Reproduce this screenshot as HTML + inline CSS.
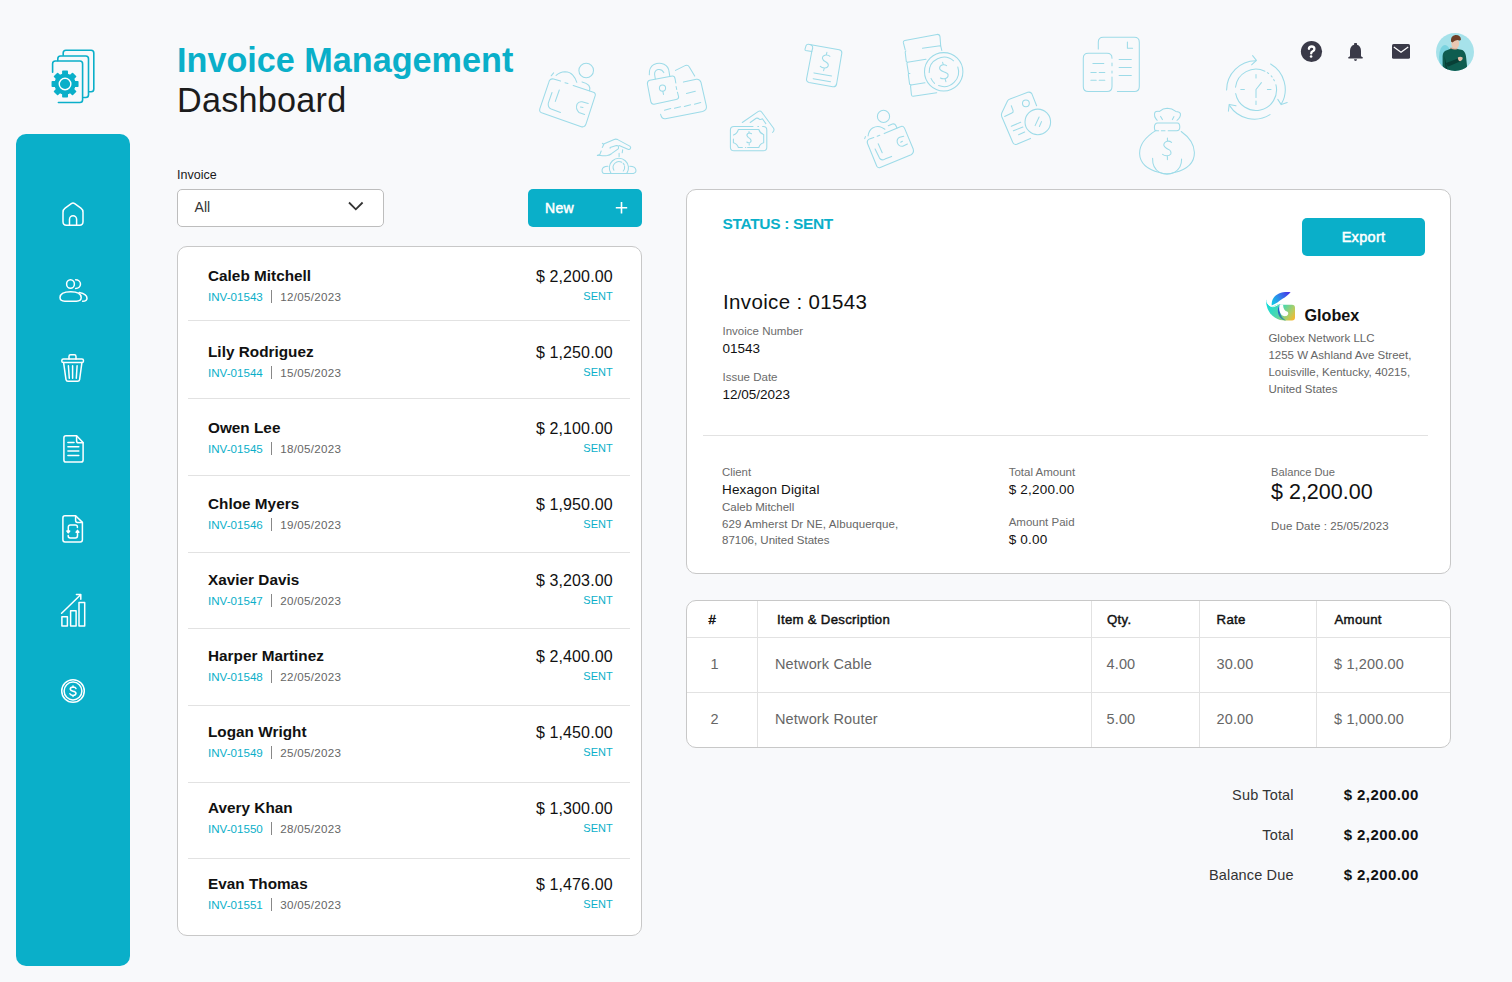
<!DOCTYPE html>
<html><head><meta charset="utf-8"><title>Invoice Management Dashboard</title>
<style>
html,body{margin:0;padding:0;}
body{width:1512px;height:982px;background:#F8F9FB;position:relative;overflow:hidden;font-family:"Liberation Sans",sans-serif;}
.t{position:absolute;line-height:1;white-space:nowrap;}
</style></head><body>
<div style="position:absolute;left:16px;top:134px;width:114px;height:832px;background:#0AAFC9;border-radius:10px;"></div>
<div class="t" style="left:177px;top:43.10px;font-size:34.2px;font-weight:700;color:#0AAFC9;">Invoice Management</div>
<div class="t" style="left:177px;top:83.10px;font-size:34.2px;font-weight:400;color:#1c1c1c;letter-spacing:0.25px;">Dashboard</div>
<div class="t" style="left:177px;top:169.44px;font-size:12.5px;font-weight:400;color:#1a1a1a;">Invoice</div>
<div style="position:absolute;left:177px;top:189px;width:207px;height:38px;box-sizing:border-box;border:1px solid #BDBDBD;border-radius:5px;background:#fff;"></div>
<div class="t" style="left:194.6px;top:200.17px;font-size:14px;font-weight:400;color:#333;">All</div>
<svg style="position:absolute;left:346px;top:199px" width="20" height="14" viewBox="0 0 20 14"><path d="M3 3.5 L9.8 10.3 L16.6 3.5" fill="none" stroke="#333" stroke-width="1.8"/></svg>
<div style="position:absolute;left:528px;top:189px;width:114px;height:38px;background:#0AAFC9;border-radius:5px;"></div>
<div class="t" style="left:545px;top:201.17px;font-size:14px;font-weight:400;color:#fff;letter-spacing:0.3px;-webkit-text-stroke:0.5px #fff;">New</div>
<svg style="position:absolute;left:614px;top:200px" width="15" height="15" viewBox="0 0 15 15"><path d="M7.5 2 V13.5 M1.8 7.7 H13.2" stroke="#fff" stroke-width="1.6"/></svg>
<div style="position:absolute;left:177px;top:246px;width:465px;height:690px;box-sizing:border-box;border:1px solid #C8C8C8;border-radius:10px;background:#fff;"></div>
<div class="t" style="left:208px;top:268.07px;font-size:15.3px;font-weight:700;color:#111;letter-spacing:0.02px;">Caleb Mitchell</div>
<div class="t" style="right:899.28px;top:268.98px;font-size:16px;font-weight:400;color:#111;letter-spacing:0.12px;">$ 2,200.00</div>
<div class="t" style="left:208px;top:291.20px;font-size:11.6px;font-weight:400;color:#0AAFC9;">INV-01543</div>
<div style="position:absolute;left:271px;top:290px;width:1px;height:13px;background:#888;"></div>
<div class="t" style="left:280.3px;top:291.20px;font-size:11.6px;font-weight:400;color:#666;letter-spacing:0.3px;">12/05/2023</div>
<div class="t" style="right:899.3px;top:290.70px;font-size:11px;font-weight:400;color:#0AAFC9;">SENT</div>
<div class="t" style="left:208px;top:344.07px;font-size:15.3px;font-weight:700;color:#111;letter-spacing:0.02px;">Lily Rodriguez</div>
<div class="t" style="right:899.28px;top:344.98px;font-size:16px;font-weight:400;color:#111;letter-spacing:0.12px;">$ 1,250.00</div>
<div class="t" style="left:208px;top:367.20px;font-size:11.6px;font-weight:400;color:#0AAFC9;">INV-01544</div>
<div style="position:absolute;left:271px;top:366px;width:1px;height:13px;background:#888;"></div>
<div class="t" style="left:280.3px;top:367.20px;font-size:11.6px;font-weight:400;color:#666;letter-spacing:0.3px;">15/05/2023</div>
<div class="t" style="right:899.3px;top:366.70px;font-size:11px;font-weight:400;color:#0AAFC9;">SENT</div>
<div class="t" style="left:208px;top:420.07px;font-size:15.3px;font-weight:700;color:#111;letter-spacing:0.02px;">Owen Lee</div>
<div class="t" style="right:899.28px;top:420.98px;font-size:16px;font-weight:400;color:#111;letter-spacing:0.12px;">$ 2,100.00</div>
<div class="t" style="left:208px;top:443.20px;font-size:11.6px;font-weight:400;color:#0AAFC9;">INV-01545</div>
<div style="position:absolute;left:271px;top:442px;width:1px;height:13px;background:#888;"></div>
<div class="t" style="left:280.3px;top:443.20px;font-size:11.6px;font-weight:400;color:#666;letter-spacing:0.3px;">18/05/2023</div>
<div class="t" style="right:899.3px;top:442.70px;font-size:11px;font-weight:400;color:#0AAFC9;">SENT</div>
<div class="t" style="left:208px;top:496.07px;font-size:15.3px;font-weight:700;color:#111;letter-spacing:0.02px;">Chloe Myers</div>
<div class="t" style="right:899.28px;top:496.98px;font-size:16px;font-weight:400;color:#111;letter-spacing:0.12px;">$ 1,950.00</div>
<div class="t" style="left:208px;top:519.20px;font-size:11.6px;font-weight:400;color:#0AAFC9;">INV-01546</div>
<div style="position:absolute;left:271px;top:518px;width:1px;height:13px;background:#888;"></div>
<div class="t" style="left:280.3px;top:519.20px;font-size:11.6px;font-weight:400;color:#666;letter-spacing:0.3px;">19/05/2023</div>
<div class="t" style="right:899.3px;top:518.71px;font-size:11px;font-weight:400;color:#0AAFC9;">SENT</div>
<div class="t" style="left:208px;top:572.07px;font-size:15.3px;font-weight:700;color:#111;letter-spacing:0.02px;">Xavier Davis</div>
<div class="t" style="right:899.28px;top:572.98px;font-size:16px;font-weight:400;color:#111;letter-spacing:0.12px;">$ 3,203.00</div>
<div class="t" style="left:208px;top:595.20px;font-size:11.6px;font-weight:400;color:#0AAFC9;">INV-01547</div>
<div style="position:absolute;left:271px;top:594px;width:1px;height:13px;background:#888;"></div>
<div class="t" style="left:280.3px;top:595.20px;font-size:11.6px;font-weight:400;color:#666;letter-spacing:0.3px;">20/05/2023</div>
<div class="t" style="right:899.3px;top:594.71px;font-size:11px;font-weight:400;color:#0AAFC9;">SENT</div>
<div class="t" style="left:208px;top:648.07px;font-size:15.3px;font-weight:700;color:#111;letter-spacing:0.02px;">Harper Martinez</div>
<div class="t" style="right:899.28px;top:648.98px;font-size:16px;font-weight:400;color:#111;letter-spacing:0.12px;">$ 2,400.00</div>
<div class="t" style="left:208px;top:671.20px;font-size:11.6px;font-weight:400;color:#0AAFC9;">INV-01548</div>
<div style="position:absolute;left:271px;top:670px;width:1px;height:13px;background:#888;"></div>
<div class="t" style="left:280.3px;top:671.20px;font-size:11.6px;font-weight:400;color:#666;letter-spacing:0.3px;">22/05/2023</div>
<div class="t" style="right:899.3px;top:670.71px;font-size:11px;font-weight:400;color:#0AAFC9;">SENT</div>
<div class="t" style="left:208px;top:724.07px;font-size:15.3px;font-weight:700;color:#111;letter-spacing:0.02px;">Logan Wright</div>
<div class="t" style="right:899.28px;top:724.98px;font-size:16px;font-weight:400;color:#111;letter-spacing:0.12px;">$ 1,450.00</div>
<div class="t" style="left:208px;top:747.20px;font-size:11.6px;font-weight:400;color:#0AAFC9;">INV-01549</div>
<div style="position:absolute;left:271px;top:746px;width:1px;height:13px;background:#888;"></div>
<div class="t" style="left:280.3px;top:747.20px;font-size:11.6px;font-weight:400;color:#666;letter-spacing:0.3px;">25/05/2023</div>
<div class="t" style="right:899.3px;top:746.71px;font-size:11px;font-weight:400;color:#0AAFC9;">SENT</div>
<div class="t" style="left:208px;top:800.07px;font-size:15.3px;font-weight:700;color:#111;letter-spacing:0.02px;">Avery Khan</div>
<div class="t" style="right:899.28px;top:800.98px;font-size:16px;font-weight:400;color:#111;letter-spacing:0.12px;">$ 1,300.00</div>
<div class="t" style="left:208px;top:823.20px;font-size:11.6px;font-weight:400;color:#0AAFC9;">INV-01550</div>
<div style="position:absolute;left:271px;top:822px;width:1px;height:13px;background:#888;"></div>
<div class="t" style="left:280.3px;top:823.20px;font-size:11.6px;font-weight:400;color:#666;letter-spacing:0.3px;">28/05/2023</div>
<div class="t" style="right:899.3px;top:822.71px;font-size:11px;font-weight:400;color:#0AAFC9;">SENT</div>
<div class="t" style="left:208px;top:876.07px;font-size:15.3px;font-weight:700;color:#111;letter-spacing:0.02px;">Evan Thomas</div>
<div class="t" style="right:899.28px;top:876.98px;font-size:16px;font-weight:400;color:#111;letter-spacing:0.12px;">$ 1,476.00</div>
<div class="t" style="left:208px;top:899.20px;font-size:11.6px;font-weight:400;color:#0AAFC9;">INV-01551</div>
<div style="position:absolute;left:271px;top:898px;width:1px;height:13px;background:#888;"></div>
<div class="t" style="left:280.3px;top:899.20px;font-size:11.6px;font-weight:400;color:#666;letter-spacing:0.3px;">30/05/2023</div>
<div class="t" style="right:899.3px;top:898.71px;font-size:11px;font-weight:400;color:#0AAFC9;">SENT</div>
<div style="position:absolute;left:188px;top:320px;width:442px;height:1px;background:#E2E2E2;"></div>
<div style="position:absolute;left:188px;top:398px;width:442px;height:1px;background:#E2E2E2;"></div>
<div style="position:absolute;left:188px;top:475px;width:442px;height:1px;background:#E2E2E2;"></div>
<div style="position:absolute;left:188px;top:552px;width:442px;height:1px;background:#E2E2E2;"></div>
<div style="position:absolute;left:188px;top:628px;width:442px;height:1px;background:#E2E2E2;"></div>
<div style="position:absolute;left:188px;top:705px;width:442px;height:1px;background:#E2E2E2;"></div>
<div style="position:absolute;left:188px;top:782px;width:442px;height:1px;background:#E2E2E2;"></div>
<div style="position:absolute;left:188px;top:858px;width:442px;height:1px;background:#E2E2E2;"></div>
<div style="position:absolute;left:686px;top:189px;width:765px;height:385px;box-sizing:border-box;border:1px solid #C8C8C8;border-radius:10px;background:#fff;"></div>
<div class="t" style="left:722.6px;top:215.50px;font-size:15.5px;font-weight:700;color:#0AAFC9;letter-spacing:-0.35px;">STATUS : SENT</div>
<div style="position:absolute;left:1302px;top:218px;width:123px;height:38px;background:#0AAFC9;border-radius:5px;"></div>
<div class="t" style="left:1063.5px;width:600px;text-align:center;top:229.55px;font-size:14.5px;font-weight:400;color:#fff;letter-spacing:0.3px;-webkit-text-stroke:0.5px #fff;">Export</div>
<div class="t" style="left:723px;top:292.18px;font-size:20.5px;font-weight:400;color:#111;letter-spacing:0.35px;">Invoice : 01543</div>
<div class="t" style="left:722.5px;top:325.88px;font-size:11.5px;font-weight:400;color:#6b6b6b;">Invoice Number</div>
<div class="t" style="left:722.5px;top:342.19px;font-size:13.5px;font-weight:400;color:#111;">01543</div>
<div class="t" style="left:722.5px;top:371.88px;font-size:11.5px;font-weight:400;color:#6b6b6b;">Issue Date</div>
<div class="t" style="left:722.5px;top:388.19px;font-size:13.5px;font-weight:400;color:#111;">12/05/2023</div>
<div class="t" style="left:1304.5px;top:306.91px;font-size:16.2px;font-weight:700;color:#111;">Globex</div>
<div class="t" style="left:1268.4px;top:332.78px;font-size:11.5px;font-weight:400;color:#666;">Globex Network LLC</div>
<div class="t" style="left:1268.4px;top:349.78px;font-size:11.5px;font-weight:400;color:#666;">1255 W Ashland Ave Street,</div>
<div class="t" style="left:1268.4px;top:366.78px;font-size:11.5px;font-weight:400;color:#666;">Louisville, Kentucky, 40215,</div>
<div class="t" style="left:1268.4px;top:383.78px;font-size:11.5px;font-weight:400;color:#666;">United States</div>
<div style="position:absolute;left:703px;top:435px;width:725px;height:1px;background:#E2E2E2;"></div>
<div class="t" style="left:722px;top:466.67px;font-size:11.4px;font-weight:400;color:#6b6b6b;">Client</div>
<div class="t" style="left:722px;top:482.59px;font-size:13.5px;font-weight:400;color:#111;letter-spacing:0.15px;">Hexagon Digital</div>
<div class="t" style="left:722px;top:502.08px;font-size:11.5px;font-weight:400;color:#666;">Caleb Mitchell</div>
<div class="t" style="left:722px;top:518.88px;font-size:11.5px;font-weight:400;color:#666;letter-spacing:0.1px;">629 Amherst Dr NE, Albuquerque,</div>
<div class="t" style="left:722px;top:535.48px;font-size:11.5px;font-weight:400;color:#666;">87106, United States</div>
<div class="t" style="left:1008.7px;top:466.58px;font-size:11.5px;font-weight:400;color:#6b6b6b;">Total Amount</div>
<div class="t" style="left:1008.7px;top:482.89px;font-size:13.5px;font-weight:400;color:#111;letter-spacing:0.2px;">$ 2,200.00</div>
<div class="t" style="left:1008.7px;top:516.58px;font-size:11.5px;font-weight:400;color:#6b6b6b;">Amount Paid</div>
<div class="t" style="left:1008.7px;top:533.19px;font-size:13.5px;font-weight:400;color:#111;letter-spacing:0.2px;">$ 0.00</div>
<div class="t" style="left:1271px;top:466.84px;font-size:11.2px;font-weight:400;color:#6b6b6b;">Balance Due</div>
<div class="t" style="left:1271px;top:481.83px;font-size:21.5px;font-weight:400;color:#111;">$ 2,200.00</div>
<div class="t" style="left:1271px;top:520.58px;font-size:11.5px;font-weight:400;color:#666;letter-spacing:0.1px;">Due Date : 25/05/2023</div>
<div style="position:absolute;left:686px;top:600px;width:765px;height:148px;box-sizing:border-box;border:1px solid #C8C8C8;border-radius:10px;background:#fff;"></div>
<div style="position:absolute;left:687px;top:637px;width:763px;height:1px;background:#E2E2E2;"></div>
<div style="position:absolute;left:687px;top:692px;width:763px;height:1px;background:#E2E2E2;"></div>
<div style="position:absolute;left:757px;top:601px;width:1px;height:146px;background:#E2E2E2;"></div>
<div style="position:absolute;left:1091px;top:601px;width:1px;height:146px;background:#E2E2E2;"></div>
<div style="position:absolute;left:1199px;top:601px;width:1px;height:146px;background:#E2E2E2;"></div>
<div style="position:absolute;left:1316px;top:601px;width:1px;height:146px;background:#E2E2E2;"></div>
<div class="t" style="left:708.5px;top:612.85px;font-size:13.2px;font-weight:400;color:#111;letter-spacing:0.3px;-webkit-text-stroke:0.45px #111;">#</div>
<div class="t" style="left:777px;top:612.85px;font-size:13.2px;font-weight:400;color:#111;letter-spacing:0.3px;-webkit-text-stroke:0.45px #111;">Item &amp; Description</div>
<div class="t" style="left:1107px;top:612.85px;font-size:13.2px;font-weight:400;color:#111;letter-spacing:0.3px;-webkit-text-stroke:0.45px #111;">Qty.</div>
<div class="t" style="left:1216.6px;top:612.85px;font-size:13.2px;font-weight:400;color:#111;letter-spacing:0.3px;-webkit-text-stroke:0.45px #111;">Rate</div>
<div class="t" style="left:1334.5px;top:612.85px;font-size:13.2px;font-weight:400;color:#111;letter-spacing:0.3px;-webkit-text-stroke:0.45px #111;">Amount</div>
<div class="t" style="left:710.5px;top:656.75px;font-size:14.5px;font-weight:400;color:#666;letter-spacing:0.15px;">1</div>
<div class="t" style="left:775px;top:656.75px;font-size:14.5px;font-weight:400;color:#666;letter-spacing:0.15px;">Network Cable</div>
<div class="t" style="left:1106.5px;top:656.75px;font-size:14.5px;font-weight:400;color:#666;letter-spacing:0.15px;">4.00</div>
<div class="t" style="left:1216.5px;top:656.75px;font-size:14.5px;font-weight:400;color:#666;letter-spacing:0.15px;">30.00</div>
<div class="t" style="left:1334px;top:656.75px;font-size:14.5px;font-weight:400;color:#666;letter-spacing:0.15px;">$ 1,200.00</div>
<div class="t" style="left:710.5px;top:711.75px;font-size:14.5px;font-weight:400;color:#666;letter-spacing:0.15px;">2</div>
<div class="t" style="left:775px;top:711.75px;font-size:14.5px;font-weight:400;color:#666;letter-spacing:0.15px;">Network Router</div>
<div class="t" style="left:1106.5px;top:711.75px;font-size:14.5px;font-weight:400;color:#666;letter-spacing:0.15px;">5.00</div>
<div class="t" style="left:1216.5px;top:711.75px;font-size:14.5px;font-weight:400;color:#666;letter-spacing:0.15px;">20.00</div>
<div class="t" style="left:1334px;top:711.75px;font-size:14.5px;font-weight:400;color:#666;letter-spacing:0.15px;">$ 1,000.00</div>
<div class="t" style="right:218.35px;top:787.75px;font-size:14.5px;font-weight:400;color:#333;letter-spacing:0.15px;">Sub Total</div>
<div class="t" style="left:1343.8px;top:787.33px;font-size:15px;font-weight:700;color:#111;letter-spacing:0.4px;">$ 2,200.00</div>
<div class="t" style="right:218.35px;top:827.75px;font-size:14.5px;font-weight:400;color:#333;letter-spacing:0.15px;">Total</div>
<div class="t" style="left:1343.8px;top:827.33px;font-size:15px;font-weight:700;color:#111;letter-spacing:0.4px;">$ 2,200.00</div>
<div class="t" style="right:218.35px;top:867.75px;font-size:14.5px;font-weight:400;color:#333;letter-spacing:0.15px;">Balance Due</div>
<div class="t" style="left:1343.8px;top:867.33px;font-size:15px;font-weight:700;color:#111;letter-spacing:0.4px;">$ 2,200.00</div>
<svg style="position:absolute;left:0;top:0" width="1512" height="982" viewBox="0 0 1512 982"><g fill="none" stroke="#9DDBE8" stroke-width="1.05" stroke-linecap="round" stroke-linejoin="round">
<path d="M560.5 81.1 L553.6 79 Q549.6 78.2 548.7 82.7 L539.8 108.8 Q538.8 112.4 543 113.2 L581.3 126.7 Q585 127.6 586.2 123.4 L595.2 95.7 Q596 92.8 592.7 92.1 L573.2 85.5 M565 82.7 L567.9 83.5"/>
<path d="M552 92.5 L548.3 103.1 Q547.6 107.4 551.2 109 L560.5 112.4 M559.3 90 L555.3 101.4"/>
<path d="M588.2 103.5 L582.1 101.8 Q578.6 101.2 577 104.2 Q575.4 108.6 578.9 112.4 L584.6 114.5 M580.5 107.1 L583 107.5"/>
<path d="M556.1 75.4 Q560 71.8 565 71.7 Q570 71.8 572.8 75.2 Q575.6 78.4 576.8 82.3 M551.2 75.8 L553.6 72.9 M582.1 81.9 Q586.6 82.8 588.8 85.4 Q590.6 88 589.5 90.8"/>
<circle cx="586.2" cy="70.5" r="7.3"/>
<path d="M683.4 82.1 L696.3 79.3 Q699.8 78.8 701 82.4 L706.4 106.1 Q707 110.2 702.6 111.5 L665.4 118.7 Q661.8 119.2 660.6 114.3"/>
<path d="M686.5 93.5 L695.3 91.3 M664.4 110.2 L670.7 108.6 M674.5 108.3 L680.5 106.7 M684.3 106.4 L690.6 104.8 M694.4 104.2 L700.7 102.6"/>
<path d="M675.5 70.4 L685.6 65.4 Q688 64.6 689.3 66.9 L694.7 76.1"/>
<path d="M649.7 80.3 L672.3 76.1 Q674.6 76 675.1 78.9 L675.8 83 M676.1 86.5 L676.7 89.4 M677.4 92.2 L678.6 96.6 Q679 99 676.1 99.5 L654 104.2 Q651.4 104.4 650.8 101.7 L647.4 84 Q647.2 81 649.7 80.3"/>
<path d="M649.3 74.8 Q648.8 67.4 654 64.4 Q659 62.2 664 64.2 Q668.8 66.6 669.1 72 L669.8 76.1 M655.3 78.9 L654.6 74.5 Q654.4 70.6 658 69.6 Q661.8 68.8 663.8 72.6"/>
<circle cx="662.5" cy="88.1" r="3.1"/><path d="M662.8 91.2 L663.5 94.4"/>
<path d="M809.6 44.5 L839.2 49.7 Q842.2 50.4 841.8 53.2 L836.6 84 Q835.8 87.2 832.8 86.7 L809 82.4 Q806 81.6 806.6 78.6 L811.8 51.5"/>
<path d="M811.8 51.5 L805.6 50.4 Q804.8 50.2 805 49.2 L806 45.8 Q806.6 44.2 808.4 44.3 L809.6 44.5 Q812.8 45 812.7 48 L811.8 51.5"/>
<path d="M829.9 56.3 Q828.4 54.6 825.8 55 Q822.4 55.6 822.4 58.4 Q822.8 60.6 826 62 Q828.8 63.6 828.2 66 Q827.2 68.2 824.4 68 Q821.8 67.8 820.3 66.3 M826.9 52.3 L826.3 54.8 M824.3 68.2 L823.6 70.7"/>
<path d="M814 72.9 L831.6 75.9 M813.2 78.7 L830.5 81.7"/>
<path d="M905.2 49.8 L903.3 42.4 Q903 40.8 904.8 40.4 L937 34.4 Q939.8 34.2 940 36.8 L940.7 45.8 L941.8 50.5 M922.4 48.3 L940.2 45.8"/>
<path d="M905.9 50.9 Q905.4 51.2 905.2 52.2 L906.3 61.5 L907.4 62.3 L926 59.3 M907.4 62.3 Q906.8 63 907 64 L908.5 73.3 L909.9 73.6 M908.5 73.8 Q908.2 74.6 908.4 75.4 L909.6 84.3 L911 85 L925 82.8"/>
<path d="M911 85 Q910.4 85.8 910.6 86.6 L911.4 94.5 Q911.8 96.6 913.2 96.3 L936.7 92.7"/>
<circle cx="943.7" cy="71.8" r="19.2"/>
<path d="M929.2 72.6 A14.8 14.8 0 0 1 953.6 60.8 M957.8 67 A14.8 14.8 0 0 1 938.6 85.6 M934.6 83.4 A14.8 14.8 0 0 1 931 78.4"/>
<path d="M946.6 65.6 Q945 64.4 942.9 64.8 Q939.6 65.6 939.6 68.1 Q939.8 70.4 943.7 71.8 Q947.6 73 948.1 74.7 Q948.4 78 944.4 78.8 Q942 79 940.4 78 M942.6 62.3 L943.3 64.6 M945.1 78.8 L945.9 81.7"/>
<path d="M604.3 173.4 H633.4 Q636.4 172.6 635.9 169.8 Q635.2 166.2 629.8 166.2 M607.9 166.2 Q602.6 166.4 602.1 169.8 Q601.8 173.2 604.3 173.4"/>
<path d="M611.0 173.4 A9.6 9.6 0 1 1 626.8 173.4 M613.9 170.2 A5.8 5.8 0 0 1 621.8 162.3 M623.2 163.4 A5.8 5.8 0 0 1 624.3 165.1 M624.6 166.3 A5.8 5.8 0 0 1 623.3 171.0"/>
<path d="M603.6 144.1 L614.2 139.4 Q616 138.8 617.7 139.6 L629.8 146.1 Q631.2 147.4 630.5 148.3 Q629.8 149.8 628.5 149.5 L619.1 145.6"/>
<path d="M610.1 148.3 V147.6 L616.4 145.4 Q618.6 145.4 618.4 146.8 Q618.8 148.4 618.2 148.8 L611.5 153.7 Q609.6 155 607.4 155.5 Q604 156 600.7 155.5 L597.4 155.3"/>
<path d="M603.6 144.7 L602.3 147.4 M601.2 151 L599.8 154.6 L597.4 155.5 M602.4 143.4 L603.8 144.6 M622.7 149.7 L622.2 152.8 M619.1 153.3 V156.4"/>
<path d="M753 126.4 H734 Q730.4 126.4 730.4 130 V147.2 Q730.4 150.8 734 150.8 H763.2 Q766.8 150.8 766.8 147.2 V130 Q766.8 126.4 763.2 126.4 H762.6 M757.8 126.4 H758.6"/>
<path d="M733.4 135 Q737 134 738.4 129.5 H758.8 Q760 133.4 763.7 134.6 V142.8 Q760 143.6 758.8 147.5 H747.6 M745.4 147.5 H745.8 M742.4 147.5 H738.4 Q737 143.6 733.4 142.8 V139"/>
<path d="M751.5 133.8 Q749.5 132.4 747.6 133.6 Q746 135.3 748.2 137.4 L750 138.6 Q752 140.6 750.4 142.4 Q748.4 143.4 746.8 142"/><path d="M749 131.6 V133 M749.2 143.5 V145"/>
<path d="M742.3 122.5 L758.4 111.4 Q760.4 110.4 761.8 112.2 L773.6 128.2 Q774.8 130.6 772.6 132.4"/><path d="M750.2 122.5 L756.2 118.3 Q757.6 117.6 759.6 119.4 Q761 119.8 762.4 118.7 L765.8 123.6"/>
<path d="M873.8 137.6 L869.4 138.9 Q866.6 140.4 867.4 143.3 L876.8 166.2 Q878.2 168.4 880.2 167.5 L911.1 154.7 Q914.4 153 913.1 148.7 L904.4 127.9 Q903 125.6 901 126.5 L884.2 133.6 M877.2 136.3 L879.8 135.3"/>
<path d="M875.1 149 L879.5 158.1 Q881.4 161 884.9 159.1 L891.6 156.4 M878.2 143.7 L882.2 152.7"/>
<path d="M903.7 136.3 L899.7 137.3 Q896.4 139 897.3 142.6 Q898.6 146.6 902.7 146.3 L907.4 144 M900.7 142.3 L902.4 141.3"/>
<path d="M868.1 135.9 Q868.8 130.4 872.6 128 Q877.5 125.4 881.6 127.4 L884.9 129.2 M864.7 138.6 L865.4 136.6 M888.3 125.8 L892.4 124 Q894.8 123.4 895.8 125.4 L897 127.9"/>
<circle cx="883.5" cy="116.4" r="6.1"/>
<path d="M1098.3 49 V42.2 Q1098.3 37.2 1103.3 37.2 H1134.3 Q1139.3 37.2 1139.3 42.2 V86.5 Q1139.3 91.5 1134.3 91.5 H1117.4"/>
<path d="M1127.4 41.9 V48.2 H1132.6"/><path d="M1119.1 59.5 H1131.3 M1119.1 67.4 H1131.3 M1119.1 75.4 H1131.3"/>
<path d="M1112 58.2 Q1112 53.2 1107 53.2 H1088.3 Q1083.3 53.2 1083.3 58.2 V86.5 Q1083.3 91.5 1088.3 91.5 H1107 Q1112 91.5 1112 86.5 V77 M1112 63.1 V65.8 M1112 71 V73"/>
<path d="M1092.9 63.4 H1103.8 M1090.9 72.4 H1096.2 M1099.2 72.4 H1104.8 M1090.9 80.3 H1096.2 M1099.2 80.3 H1104.8"/>
<path d="M1030.5 138.4 L1016.8 144.2 Q1013.6 145.2 1012.5 141.8 L1001.8 116.7 Q1001 114.6 1002 112.6 L1007.6 100.8 Q1008.6 99.4 1010 99 L1027.8 92.3 Q1030.8 91.6 1032 94.1 L1036.6 105.7"/>
<path d="M1011.3 105.7 L1013.1 110.6 Q1013.6 112.4 1011.9 113 L1004.6 116.4"/><circle cx="1025.9" cy="103.3" r="3.4"/>
<path d="M1011.3 126.2 L1020.7 122.2 M1013.4 130.8 L1022.9 127.1 M1018.6 134.7 L1024.7 132"/>
<circle cx="1037.8" cy="121.9" r="12.8"/><path d="M1035.1 125.6 L1039.1 117 M1039.4 126.5 L1041.5 121.6"/>
<path d="M1157.2 120.3 Q1153.4 116.4 1154.9 112.4 Q1156 111 1159.5 111.4 Q1163 108.4 1167.3 108.3 Q1172 108.4 1175.8 111.4 Q1179.6 111.6 1180.4 113.6 Q1181 117 1177 120.3"/>
<path d="M1160.6 116.4 L1162.4 119.6 M1174 116.6 L1172.4 119.6"/>
<path d="M1158.6 130.7 H1155.6 Q1154.4 130.6 1154.4 127 Q1154.6 123 1157.6 123 H1177.4 Q1179.8 123.2 1179.8 127 Q1179.8 130.7 1176.6 130.7 H1168.2 M1165 130.7 H1161.4"/>
<path d="M1156 130.4 Q1139.4 140.8 1139.6 153.4 Q1140 167.4 1159.5 172.6 Q1167 175 1174.4 172.6 Q1194.6 167.4 1194.4 152.4 Q1194 140.6 1181.2 131.5"/>
<path d="M1152.6 158.2 Q1152.2 168 1159.6 172.4 Q1167 176 1174.4 172.4 Q1181.8 168 1181.6 159"/>
<path d="M1171.6 142.4 Q1169.6 140.8 1167.2 141.2 Q1163.8 142.2 1163.8 145.2 Q1164.4 147.8 1168.6 149.4 Q1171.6 151 1170.8 154 Q1169.4 156 1166.4 155.8 Q1164.2 155.6 1162.6 154.4 M1167.4 138 V141 M1167.4 155.8 V159.6"/>
<path d="M1275.9 84.7 A20.6 20.6 0 1 1 1235.7 93.6 M1235.5 87.2 A20.6 20.6 0 0 1 1264.9 71.2 M1267.4 72.6 A20.6 20.6 0 0 1 1268.6 73.5 M1271.2 75.9 A20.6 20.6 0 0 1 1272.1 77.0 M1273.7 79.4 A20.6 20.6 0 0 1 1274.4 80.7"/>
<path d="M1256 74.6 V78 M1256 101 V104.4 M1240.8 89.5 H1244.4 M1267.4 89.5 H1271 M1256 97.4 V89.5 L1261.4 82.6 M1256 91 V93"/>
<path d="M1226.6 90 A29.4 29.4 0 0 1 1255.8 60.8 M1270.6 64 A29.4 29.4 0 0 1 1281.6 103.6 M1270 114.6 A29.4 29.4 0 0 1 1229.6 105.6"/>
<path d="M1252.6 55.6 L1256.4 60.4 L1251.6 64.8 M1277.8 99.4 L1281.2 104.6 L1287.2 102.6 M1228.4 111.2 L1229.2 104.4 L1236 105.8"/>
</g><path fill="none" stroke="#0AAFC9" stroke-width="1.6" stroke-linecap="round" d="M63.2 55.2 V53 Q63.2 50.3 65.9 50.3 H91.1 Q93.8 50.3 93.8 53 V89 Q93.8 91.7 91.1 91.7 H89.4"/>
<path fill="none" stroke="#0AAFC9" stroke-width="1.6" stroke-linecap="round" d="M57.8 60.6 V58.7 Q57.8 56 60.5 56 H85.8 Q88.5 56 88.5 58.7 V94.8 Q88.5 97.5 85.8 97.5 H83.6"/>
<path fill="none" stroke="#0AAFC9" stroke-width="1.6" stroke-linecap="round" d="M52.6 72.2 V63.7 Q52.6 61 55.3 61 H79.9 Q82.6 61 82.6 63.7 V99.8 Q82.6 102.5 79.9 102.5 H58.4"/>
<g fill="#0AAFC9"><circle cx="65.05" cy="84" r="10.6"/><rect x="62.1" y="70.5" width="5.9" height="5" rx="0.8" transform="rotate(0 65.05 84)"/><rect x="62.1" y="70.5" width="5.9" height="5" rx="0.8" transform="rotate(45 65.05 84)"/><rect x="62.1" y="70.5" width="5.9" height="5" rx="0.8" transform="rotate(90 65.05 84)"/><rect x="62.1" y="70.5" width="5.9" height="5" rx="0.8" transform="rotate(135 65.05 84)"/><rect x="62.1" y="70.5" width="5.9" height="5" rx="0.8" transform="rotate(180 65.05 84)"/><rect x="62.1" y="70.5" width="5.9" height="5" rx="0.8" transform="rotate(225 65.05 84)"/><rect x="62.1" y="70.5" width="5.9" height="5" rx="0.8" transform="rotate(270 65.05 84)"/><rect x="62.1" y="70.5" width="5.9" height="5" rx="0.8" transform="rotate(315 65.05 84)"/></g>
<circle cx="65.05" cy="84" r="5.8" fill="none" stroke="#fff" stroke-width="1.4"/><g fill="none" stroke="#fff" stroke-width="1.5" stroke-linecap="round" stroke-linejoin="round"><path d="M63 212.2 Q63 209.6 65.1 208.1 L71.3 203.6 Q73 202.5 74.7 203.6 L80.9 208.1 Q83 209.6 83 212.2 L83 221.8 Q83 225.2 79.6 225.2 L66.4 225.2 Q63 225.2 63 221.8 Z"/><path d="M69.5 225.2 V219.2 A3.55 3.55 0 0 1 76.6 219.2 V225.2"/></g>
<g fill="none" stroke="#fff" stroke-width="1.5" stroke-linecap="round" stroke-linejoin="round"><ellipse cx="70.5" cy="284" rx="3.9" ry="4.3"/><path d="M75.6 279.7 A4.9 4.4 0 0 1 75.6 288.5"/><path d="M60 297.6 C60 293.6 64.6 291.7 70.7 291.7 C76.8 291.7 81.2 293.6 81.2 297.6 C81.2 300.4 79.8 301.2 76.4 301.2 L64.8 301.2 C61.4 301.2 60 300.4 60 297.6 Z"/><path d="M79.2 292.4 C83.6 293.2 87 295.2 87 298.2 C87 300.6 85.6 301.2 82.6 301.3"/></g>
<g fill="none" stroke="#fff" stroke-width="1.5" stroke-linecap="round" stroke-linejoin="round" stroke-width="1.3"><rect x="61.8" y="359.1" width="21.7" height="3.4" rx="1.6"/><path d="M69 359 V356.4 Q69 354.8 70.6 354.8 H74.4 Q76 354.8 76 356.4 V359"/><path d="M63.6 362.6 L66 379.6 Q66.3 381.3 68 381.3 H77.6 Q79.3 381.3 79.6 379.6 L81.9 362.6"/><path d="M68.4 365.8 L69.3 378.3 M72.6 365.8 V378.3 M77.1 365.8 L76.3 378.3"/></g>
<g fill="none" stroke="#fff" stroke-width="1.5" stroke-linecap="round" stroke-linejoin="round" stroke-width="1.3"><path d="M76.6 435.8 H66 Q63.9 435.8 63.9 437.9 V460 Q63.9 462.1 66 462.1 H81 Q83.1 462.1 83.1 460 V442.6 Z"/><path d="M76.6 435.9 V441 Q76.6 442.8 78.4 442.8 H83"/><path d="M67.9 442.5 H74 M67.9 446.7 H78.8 M67.9 451.1 H78.8 M67.9 455.5 H78.8"/></g>
<g fill="none" stroke="#fff" stroke-width="1.5" stroke-linecap="round" stroke-linejoin="round" stroke-width="1.3"><path d="M75.6 515.8 H65 Q62.9 515.8 62.9 517.9 V539.8 Q62.9 541.9 65 541.9 H80.3 Q82.4 541.9 82.4 539.8 V522.4 Z"/><path d="M75.6 515.9 V520.6 Q75.6 522.4 77.4 522.4 H82.3"/><path d="M77.4 527.4 V526.8 Q77.4 525 75.4 525 H70.4 Q68.3 525 68.3 527.2 V532"/><path d="M66.9 531 L68.3 532.8 L69.7 531 Z" fill="#fff"/><path d="M68.2 535.5 V536 Q68.2 537.9 70.2 537.9 H75.4 Q77.5 537.9 77.5 535.8 V531.5"/><path d="M76.1 532.2 L77.5 530.4 L78.9 532.2 Z" fill="#fff"/></g>
<g fill="none" stroke="#fff" stroke-width="1.5" stroke-linecap="round" stroke-linejoin="round" stroke-width="1.3" stroke-linecap="butt" stroke-linejoin="miter"><rect x="61.9" y="616.8" width="5.5" height="9.3"/><rect x="70.6" y="610.8" width="5.5" height="15.3"/><rect x="79" y="602.5" width="5.7" height="23.6"/><path d="M61.6 613.2 L80.4 595 M76.4 594.6 H80.8 V599.2" stroke-linecap="round"/></g>
<g fill="none" stroke="#fff" stroke-width="1.5" stroke-linecap="round" stroke-linejoin="round" stroke-width="1.2"><circle cx="73" cy="691" r="11.3"/><circle cx="73" cy="691" r="8.9"/></g>
<path d="M76 688.6 Q75.4 687 73 687 Q70.2 687.2 70.2 689.2 Q70.4 690.8 73 691.2 Q75.8 691.6 76 693.4 Q75.8 695.3 73 695.4 Q70.6 695.4 69.9 693.8 M73 685.9 V687 M73 695.4 V696.4" fill="none" stroke="#fff" stroke-width="1.5" stroke-linecap="round"/><circle cx="1311.5" cy="51.5" r="10.6" fill="#3A3A48"/>
<path d="M1308.9 48.9 Q1309 46.5 1311.7 46.5 Q1314.4 46.5 1314.4 48.9 Q1314.4 50.5 1312.7 51.3 Q1311.2 52 1311.2 53.4" fill="none" stroke="#fff" stroke-width="2.3" stroke-linecap="round"/><circle cx="1311.1" cy="56.5" r="1.3" fill="#fff"/>
<path d="M1354.1 44.8 V43.6 Q1354.1 43 1354.8 43 H1356.3 Q1357 43 1357 43.6 V44.8 Q1361 46 1361 51 V56.2 L1362.9 57.6 Q1363 58.4 1362.4 58.4 H1348.6 Q1348 58.4 1348.1 57.6 L1350 56.2 V51 Q1350 46 1354.1 44.8 Z" fill="#3A3A48"/><path d="M1354 59.2 H1357 Q1357 60.9 1355.5 60.9 Q1354 60.9 1354 59.2 Z" fill="#3A3A48"/>
<rect x="1392" y="44" width="18" height="14.8" rx="1.6" fill="#3A3A48"/><path d="M1393.8 47 L1401 52.2 L1408.2 47" fill="none" stroke="#fff" stroke-width="1.3"/>
<defs><clipPath id="av"><circle cx="1455" cy="52" r="19"/></clipPath></defs>
<defs><radialGradient id="avsh" cx="0.3" cy="0.55" r="0.35"><stop offset="0" stop-color="#3FC3D4"/><stop offset="1" stop-color="#A6E2EA"/></radialGradient></defs>
<g clip-path="url(#av)"><rect x="1436" y="33" width="38" height="38" fill="#A6E2EA"/><ellipse cx="1445" cy="57" rx="6" ry="12" fill="#6FD0DC" opacity="0.8"/><path d="M1450 47.5 L1457.5 47.8 L1457 51 L1450.5 51 Z" fill="#D9AC92"/><path d="M1451.3 42 Q1451 48.5 1455.5 48.6 Q1459.4 48 1459.2 42 Q1458.6 39.4 1455.2 39.4 Q1451.6 39.6 1451.3 42 Z" fill="#EAC8B2"/><path d="M1451 41.6 Q1450.4 36 1455.4 35.1 Q1460.6 34.8 1461 39.6 Q1460.4 41.2 1458.4 40.2 Q1455.4 39.6 1452.4 42.6 Z" fill="#6E4028"/><path d="M1442.6 76 L1442.6 56 Q1442.8 50.8 1447.5 50 L1451 48.6 Q1454 50.4 1457.6 49 L1462.4 50 Q1465.8 51.8 1466.2 58 L1468 76 Z" fill="#0E5D50"/><path d="M1444.5 56 L1445.4 68 L1447.6 70 Z M1446 63 L1458 58.6 L1461.6 60.8 L1447.8 66.8 Z" fill="#083F36"/><path d="M1457.8 57.4 Q1460.6 55.8 1462.6 57.6 Q1463 60.4 1460.2 61.2 Q1458 60.8 1457.8 57.4 Z" fill="#E3BBA4"/></g><defs>
<linearGradient id="gb1" gradientUnits="userSpaceOnUse" x1="1272" y1="304" x2="1290" y2="292"><stop offset="0" stop-color="#0FCBE6"/><stop offset="0.45" stop-color="#2F86EA"/><stop offset="1" stop-color="#4A2BE6"/></linearGradient>
<linearGradient id="gb2" gradientUnits="userSpaceOnUse" x1="1268" y1="302" x2="1294" y2="320"><stop offset="0" stop-color="#0FDCDC"/><stop offset="0.5" stop-color="#52D7A8"/><stop offset="0.8" stop-color="#B8CC60"/><stop offset="1" stop-color="#FDB62A"/></linearGradient>
<linearGradient id="gb3" gradientUnits="userSpaceOnUse" x1="1279" y1="306" x2="1284" y2="320"><stop offset="0" stop-color="#1446E4"/><stop offset="1" stop-color="#3FA08F"/></linearGradient>
</defs>
<path d="M1271.7 305.4 C1271.4 300 1274 295.6 1279 293.5 C1282.5 292 1287 291.8 1290.6 292.2 C1288.5 294.8 1285.5 297 1282.5 298.8 C1279 301 1276 304.2 1271.7 305.4 Z" fill="url(#gb1)"/>
<path d="M1266 299.4 C1266 308 1269.6 314 1274.8 317.6 C1278.4 320 1282 320.6 1285 320.6 H1292 Q1295 320.6 1295 317.6 V307.8 Q1295 304.8 1292 304.8 H1281 C1279.6 303.8 1278.4 303.8 1277.2 304.6 C1275 306 1272.5 306.8 1270.5 306.2 C1268.4 305.5 1266.8 303 1266 299.4 Z" fill="url(#gb2)"/>
<path d="M1280.4 304.8 C1277.6 307.2 1277 312.2 1279.4 316.4 C1281 319 1283.4 320.3 1286 320.6 C1282.6 318.4 1280.6 315.8 1280 312 C1279.6 309 1279.7 306.6 1280.4 304.8 Z" fill="url(#gb3)"/>
<path d="M1279.6 304.6 C1278.8 308.2 1279.1 312 1281.2 314.6 C1283.2 316.6 1286.2 316.7 1287.7 315 C1288.7 313.8 1288.3 312.1 1287 311.6 C1284.6 310.8 1283.1 308.4 1283.1 304.8 Z" fill="#fff"/>
<path d="M1266.6 301.5 C1268.5 305.6 1271 307 1273.6 306.6 C1276.2 306.2 1278.4 304.4 1280.6 302.6" fill="none" stroke="#fff" stroke-width="0.9"/></svg>
</body></html>
